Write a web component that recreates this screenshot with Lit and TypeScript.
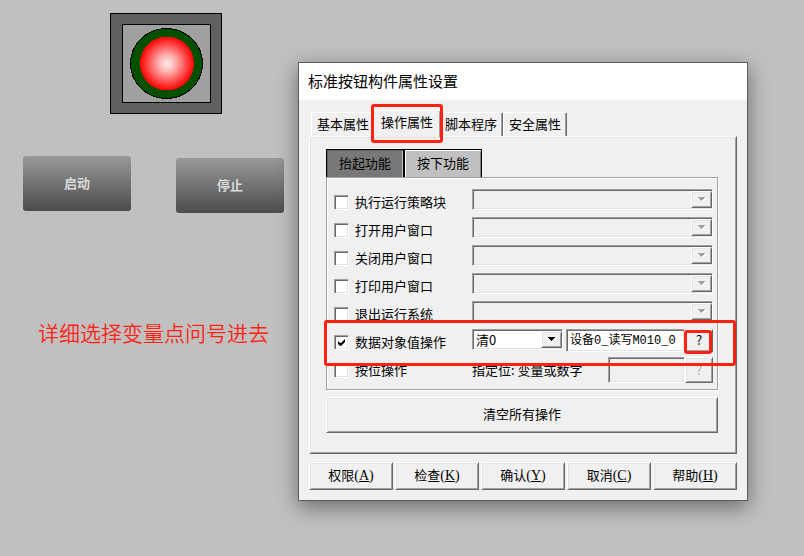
import { LitElement, html, css, svg, nothing } from "lit";
import { customElement, property, state } from "lit/decorators.js";
import { classMap } from "lit/directives/class-map.js";

const bevels = css`
  * {
    box-sizing: border-box;
  }
  button,
  input,
  select {
    font: inherit;
    color: inherit;
    margin: 0;
    padding: 0;
    border-radius: 0;
  }
  button {
    padding-bottom: 2px;
  }
  .raised {
    background: #f0f0f0;
    border: 1px solid;
    border-color: #fff #696969 #696969 #fff;
    box-shadow: inset 1px 1px #e3e3e3, inset -1px -1px #a0a0a0;
  }
  .sunken {
    background: #fff;
    border: 1px solid;
    border-color: #a0a0a0 #fff #fff #a0a0a0;
    box-shadow: inset 1px 1px #696969, inset -1px -1px #e3e3e3;
  }
  .ring {
    position: absolute;
    border: 3px solid #ff2213;
    border-radius: 3px;
    pointer-events: none;
    z-index: 2;
  }
`;

@customElement("combo-box")
export class ComboBox extends LitElement {
  @property() label = "";
  @property() value = "";
  @property({ type: Boolean }) disabled = false;

  static styles = [
    bevels,
    css`
      :host {
        display: block;
      }
      .box {
        display: flex;
        height: 21px;
        padding: 1px;
        position: relative;
      }
      .off {
        background: #f0f0f0;
      }
      select {
        flex: 1;
        min-width: 0;
        appearance: none;
        border: 0;
        outline: 0;
        background: transparent;
        padding-left: 2px;
        line-height: 17px;
        opacity: 1;
      }
      .arrow {
        position: absolute;
        right: 0;
        top: 1px;
        width: 21px;
        height: 17px;
        display: grid;
        place-items: center;
        pointer-events: none;
      }
    `,
  ];

  render() {
    return html`<div class=${classMap({ box: true, sunken: true, off: this.disabled })}>
      <select aria-label=${this.label} ?disabled=${this.disabled}>
        ${this.value ? html`<option>${this.value}</option>` : nothing}
      </select>
      <span class="arrow raised">
        <svg width="8" height="5" viewBox="0 0 8 5" shape-rendering="crispEdges">
          ${this.disabled ? svg`<path d="M1 1h7v1h-1v1h-1v1h-1v1h-1v-1z" fill="#fff" />` : nothing}
          <path
            d="M0 0h7v1h-1v1h-1v1h-1v1h-1v-1h-1v-1h-1v-1h-1z"
            fill=${this.disabled ? "#a0a0a0" : "#000"}
          />
        </svg>
      </span>
    </div>`;
  }
}

@customElement("property-dialog")
export class PropertyDialog extends LitElement {
  @state() private tab = 1;
  @state() private mode = 0;

  private tabs = ["基本属性", "操作属性", "脚本程序", "安全属性"];
  private modes = ["抬起功能", "按下功能"];
  private actions = ["执行运行策略块", "打开用户窗口", "关闭用户窗口", "打印用户窗口", "退出运行系统"];
  private commands = [
    ["权限", "A"],
    ["检查", "K"],
    ["确认", "Y"],
    ["取消", "C"],
    ["帮助", "H"],
  ];

  static styles = [
    bevels,
    css`
      :host {
        display: block;
        background: #f0f0f0;
        border: 1px solid #5c5c5c;
        box-shadow: 0 6px 20px rgba(0, 0, 0, 0.45);
        color: #000;
      }
      h1 {
        margin: 0;
        padding: 0 0 2px 9px;
        background: #fff;
        font-size: 15px;
        font-weight: 400;
        line-height: 35px;
      }
      .body {
        padding: 10px;
      }
      .tabs {
        display: flex;
        align-items: flex-end;
        height: 26px;
        padding-left: 2px;
      }
      .tab {
        position: relative;
        width: 64px;
        height: 24px;
        background: #f0f0f0;
        border: 1px solid;
        border-color: #fff #696969 transparent #fff;
        border-bottom: 0;
        border-radius: 2px 2px 0 0;
        box-shadow: inset -1px 0 #a0a0a0;
        white-space: nowrap;
      }
      .tab.on {
        width: 68px;
        height: 27px;
        margin: 0 -2px -1px;
        padding-bottom: 5px;
        z-index: 1;
      }
      .tab .ring {
        inset: -7px -3px -6px -3px;
      }
      .panel {
        padding: 12px 18px 20px 16px;
      }
      .modes {
        display: flex;
      }
      .mode {
        width: 78px;
        height: 28px;
        background: #c0c0c0;
        border: 1px solid #000;
        border-bottom: 0;
        box-shadow: inset 1px 1px #fff, inset -1px 0 #808080;
      }
      .mode.on {
        background: #787878;
        box-shadow: inset 1px 1px #606060, inset -1px 0 #c0c0c0;
      }
      .group {
        border: 1px solid #a0a0a0;
        box-shadow: inset 1px 1px #fff, 1px 1px #fff;
        padding: 11px 4px 4px 7px;
      }
      .row {
        position: relative;
        display: grid;
        grid-template-columns: 138px minmax(0, 1fr);
        align-items: start;
        height: 28px;
      }
      .row > .ring {
        inset: -9px -23px -9px -10px;
      }
      .check {
        display: flex;
        align-items: flex-start;
        gap: 6px;
        line-height: 25px;
        white-space: nowrap;
      }
      .check input {
        appearance: none;
        width: 15px;
        height: 15px;
        margin-top: 6px;
        display: grid;
        place-items: center;
      }
      .check input:checked::before {
        content: "";
        width: 7px;
        height: 7px;
        background: #000;
        clip-path: polygon(0 2px, 2px 4px, 3px 4px, 7px 0, 7px 3px, 3px 7px, 2px 7px, 0 5px);
      }
      .fields {
        display: flex;
        align-items: flex-start;
      }
      .fields combo-box {
        flex: none;
        width: 91px;
        margin-right: 3px;
      }
      .text {
        flex: 1;
        width: 0;
        min-width: 0;
        height: 23px;
        padding: 0 0 4px 3px;
        font-family: "Liberation Mono", "Noto Sans CJK SC", monospace;
        font-size: 12px;
      }
      .bits {
        flex: 1;
        line-height: 25px;
        white-space: nowrap;
      }
      .bit {
        width: 77px;
        height: 26px;
        background: #f0f0f0;
      }
      .ask {
        flex: none;
        position: relative;
        width: 28px;
        height: 23px;
      }
      .ask:disabled {
        height: 26px;
        color: #a0a0a0;
        text-shadow: 1px 1px #fff;
      }
      .ask .ring {
        inset: 0 0 -3px -2px;
      }
      .clear {
        display: block;
        width: 100%;
        height: 36px;
        margin-top: 7px;
        padding-bottom: 4px;
      }
      .commands {
        display: grid;
        grid-template-columns: repeat(5, 1fr);
        gap: 2px;
        margin-top: 8px;
      }
      .commands button {
        height: 28px;
        padding-bottom: 4px;
      }
      .key {
        font-family: "Liberation Serif", serif;
        font-size: 14px;
        line-height: 14px;
      }
    `,
  ];

  render() {
    return html`
      <h1>标准按钮构件属性设置</h1>
      <div class="body">
        <div class="tabs" role="tablist">
          ${this.tabs.map(
            (name, i) => html`<button
              role="tab"
              aria-selected=${i === this.tab}
              class=${classMap({ tab: true, on: i === this.tab })}
              @click=${() => (this.tab = i)}
            >${name}${i === 1 ? html`<span class="ring"></span>` : nothing}</button>`
          )}
        </div>
        <div class="panel raised">
          <div class="modes">
            ${this.modes.map(
              (name, i) => html`<button
                class=${classMap({ mode: true, on: i === this.mode })}
                @click=${() => (this.mode = i)}
              >${name}</button>`
            )}
          </div>
          <div class="group">
            ${this.actions.map(
              (name) => html`<div class="row">
                <label class="check"><input class="sunken" type="checkbox" />${name}</label>
                <combo-box label=${name} disabled></combo-box>
              </div>`
            )}
            <div class="row">
              <label class="check"><input class="sunken" type="checkbox" checked />数据对象值操作</label>
              <div class="fields">
                <combo-box label="数据对象值操作" value="清0"></combo-box>
                <input class="text sunken" aria-label="数据对象" value="设备0_读写M010_0" />
                <button class="ask raised">?<span class="ring"></span></button>
              </div>
              <span class="ring"></span>
            </div>
            <div class="row">
              <label class="check"><input class="sunken" type="checkbox" />按位操作</label>
              <div class="fields">
                <label class="bits" for="bit">指定位: 变量或数字</label>
                <input class="bit sunken" id="bit" disabled />
                <button class="ask raised" disabled>?</button>
              </div>
            </div>
          </div>
          <button class="clear raised">清空所有操作</button>
        </div>
        <div class="commands">
          ${this.commands.map(
            ([name, key]) =>
              html`<button class="raised">${name}<span class="key">(<u>${key}</u>)</span></button>`
          )}
        </div>
      </div>
    `;
  }
}

@customElement("app-root")
export class AppRoot extends LitElement {
  static styles = css`
    :host {
      display: grid;
      grid-template-columns: 298px minmax(0, 1fr);
      align-items: start;
      min-height: 100vh;
      box-sizing: border-box;
      padding-right: 56px;
      background: #c0c0c0;
      font: 13px "Noto Sans CJK SC", sans-serif;
    }
    .scene {
      padding: 13px 14px 0 23px;
    }
    .lamp {
      display: block;
      margin: 0 auto 42px 87px;
    }
    .controls {
      display: flex;
      justify-content: space-between;
      align-items: flex-start;
    }
    .control {
      width: 108px;
      height: 55px;
      padding: 0 0 2px;
      border: 0;
      border-radius: 3px;
      background: linear-gradient(#999, #4c4c4c);
      color: #d9d9d9;
      font: bold 13px "Noto Sans CJK SC", sans-serif;
    }
    .control.stop {
      margin-top: 2px;
    }
    .note {
      margin: 104px 0 0 15px;
      color: #ff2213;
      font-size: 21px;
      font-weight: 350;
      line-height: 30px;
      white-space: nowrap;
    }
    property-dialog {
      margin-top: 62px;
    }
  `;

  render() {
    return html`
      <section class="scene">
        <svg class="lamp" width="112" height="101" viewBox="0 0 112 101" shape-rendering="crispEdges">
          <defs>
            <radialGradient id="glow">
              <stop offset="0" stop-color="#ffeaea" />
              <stop offset="0.3" stop-color="#ffb4b4" />
              <stop offset="1" stop-color="#ff0000" />
            </radialGradient>
          </defs>
          <rect x="0.5" y="0.5" width="111" height="100" fill="#606060" stroke="#000" />
          <rect x="12.5" y="11.5" width="88" height="78" fill="#a0a0a0" stroke="#000" />
          <ellipse cx="56.5" cy="50.5" rx="36" ry="35" fill="#005000" stroke="#000" />
          <circle cx="57" cy="50.5" r="27" fill="url(#glow)" />
        </svg>
        <div class="controls">
          <button class="control">启动</button>
          <button class="control stop">停止</button>
        </div>
        <p class="note">详细选择变量点问号进去</p>
      </section>
      <property-dialog></property-dialog>
    `;
  }
}
